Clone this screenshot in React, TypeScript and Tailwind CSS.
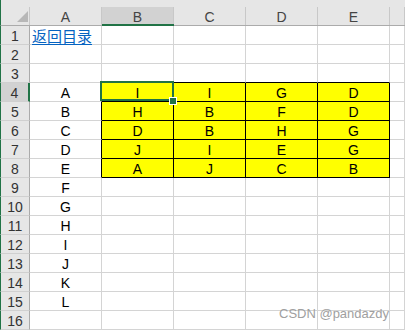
import React from 'react';

const COLS = ['A', 'B', 'C', 'D', 'E'];
const LETTERS = ['A', 'B', 'C', 'D', 'E', 'F', 'G', 'H', 'I', 'J', 'K', 'L'];
// B4:E8
const DATA = [
  ['I', 'I', 'G', 'D'],
  ['H', 'B', 'F', 'D'],
  ['D', 'B', 'H', 'G'],
  ['J', 'I', 'E', 'G'],
  ['A', 'J', 'C', 'B'],
];

const Corner = () => (
  <div className="relative h-full border-l border-l-[#217346] border-b border-b-[#ababab] bg-[#e6e6e6] flex flex-col">
    <div className="mt-[7px] flex-1 border-r border-[#c8c8c8]" />
    <svg className="absolute left-[16px] top-[11px]" width="11" height="11" viewBox="0 0 11 11">
      <polygon points="11,0 11,11 0,11" fill="#b7b7b7" />
    </svg>
  </div>
);

const ColHeader = ({ label, selected }: { label: string; selected?: boolean }) => (
  <div
    className={
      'h-full flex flex-col bg-[#e6e6e6] ' +
      (selected ? 'border-b-2 border-[#217346]' : 'border-b border-[#ababab]')
    }
  >
    <div
      className={
        'mt-[7px] flex-1 flex items-center justify-center pt-[2px] border-r border-[#c8c8c8] text-[#444] ' +
        (selected ? 'bg-[#d2d2d2]' : '')
      }
    >
      {label}
    </div>
  </div>
);

const RowHeader = ({ n, selected }: { n: number; selected?: boolean }) => (
  <div
    className={
      'flex items-center justify-center pt-px border-l border-l-[#217346] border-b border-b-[#d0d0d0] text-[#333] ' +
      (selected ? 'bg-[#d2d2d2] border-r-2 border-r-[#217346]' : 'bg-[#e6e6e6] border-r border-r-[#ababab]')
    }
  >
    {n}
  </div>
);

const Cell = ({
  children,
  className = '',
}: {
  children?: React.ReactNode;
  className?: string;
}) => (
  <div className={'flex items-center justify-center pt-px border-r border-b ' + className}>{children}</div>
);

export default function App() {
  const rows = Array.from({ length: 16 }, (_, i) => i + 1);

  return (
    <div className="relative w-[405px] h-[331px] overflow-hidden bg-white text-[14px] leading-none [font-family:'Liberation_Sans','Noto_Sans_CJK_SC',sans-serif]">
      <div className="grid grid-cols-[30px_repeat(5,72px)_1fr] grid-rows-[26px_repeat(16,19px)]">
        <Corner />
        {COLS.map((c) => (
          <ColHeader key={c} label={c} selected={c === 'B'} />
        ))}
        <ColHeader label="" />

        {rows.map((r) => {
          const inRange = r >= 4 && r <= 8;
          return (
            <React.Fragment key={r}>
              <RowHeader n={r} selected={r === 4} />
              {/* column A */}
              {r === 1 ? (
                <div className="flex items-center pl-[2px] pt-px border-r border-b border-[#d4d4d4]">
                  <span className="text-[15px] text-[#0563c1] underline underline-offset-2 [font-family:'Noto_Sans_CJK_SC',sans-serif]">
                    返回目录
                  </span>
                </div>
              ) : (
                <Cell className={inRange ? 'border-r-black border-b-[#d4d4d4]' : 'border-[#d4d4d4]'}>
                  {r >= 4 && r <= 15 ? LETTERS[r - 4] : null}
                </Cell>
              )}
              {/* columns B..E */}
              {[0, 1, 2, 3].map((ci) =>
                inRange ? (
                  <div
                    key={ci}
                    className={
                      'flex items-center justify-center pt-px bg-[#ffff00] border-r border-b border-black text-black ' +
                      (r === 4 && ci === 0 ? 'relative z-10' : '')
                    }
                  >
                    {DATA[r - 4][ci]}
                    {r === 4 && ci === 0 && (
                      <>
                        <div className="absolute -left-[2px] -top-[2px] -right-px bottom-0 border-2 border-[#217346]" />
                        <div className="absolute left-[67px] top-[14px] w-[8px] h-[8px] bg-[#217346] border border-white" />
                      </>
                    )}
                  </div>
                ) : (
                  <Cell key={ci} className={r === 3 ? 'border-r-[#d4d4d4] border-b-black' : 'border-[#d4d4d4]'} />
                )
              )}
              <Cell className="border-[#d4d4d4]" />
            </React.Fragment>
          );
        })}
      </div>

      <div className="absolute left-[279px] top-[307px] text-[13px] text-[#a0a0a0] [font-family:'Liberation_Sans',sans-serif]">
        CSDN @pandazdy
      </div>
    </div>
  );
}
